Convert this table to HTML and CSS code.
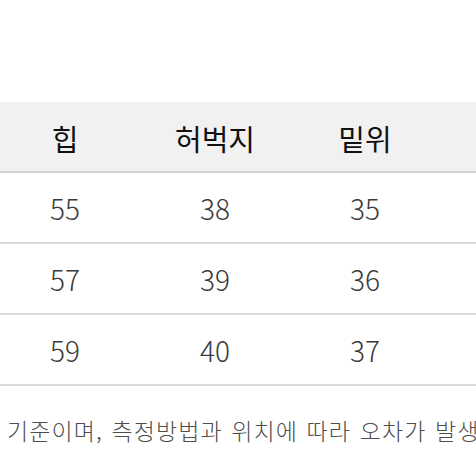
FILE: index.html
```html
<!DOCTYPE html>
<html lang="ko">
<head>
<meta charset="utf-8">
<link rel="stylesheet" href="styles.css">
</head>
<body>
<div class="page">
  <div class="size-table">
    <div class="row head">
      <div class="cell">힙</div>
      <div class="cell">허벅지</div>
      <div class="cell">밑위</div>
      <div class="cell"></div>
    </div>
    <div class="row">
      <div class="cell">55</div>
      <div class="cell">38</div>
      <div class="cell">35</div>
      <div class="cell"></div>
    </div>
    <div class="row">
      <div class="cell">57</div>
      <div class="cell">39</div>
      <div class="cell">36</div>
      <div class="cell"></div>
    </div>
    <div class="row">
      <div class="cell">59</div>
      <div class="cell">40</div>
      <div class="cell">37</div>
      <div class="cell"></div>
    </div>
  </div>
  <p class="note">기준이며, 측정방법과 위치에 따라 오차가 발생</p>
</div>
</body>
</html>
```

FILE: styles.css
```css
html, body {
  margin: 0;
  padding: 0;
  background: #ffffff;
  overflow: hidden;
}
body {
  width: 476px;
  height: 476px;
  font-family: "Noto Sans CJK KR", "Noto Sans", sans-serif;
}
.page {
  padding-top: 102px;
}
.size-table {
  margin-left: -10px;
  width: 600px;
  display: flex;
  flex-direction: column;
}
.row {
  display: grid;
  grid-template-columns: 150px 150px 150px 1fr;
  height: 69px;
  border-bottom: 2px solid #dadada;
  align-items: center;
}
.row.head {
  background: #f1f1f1;
  border-bottom-color: #d2d2d2;
}
.cell {
  text-align: center;
  font-size: 28px;
  font-weight: 300;
  color: #3a3a3a;
  line-height: 1;
}
.head .cell {
  font-size: 29px;
  font-weight: 400;
  color: #111111;
  padding-top: 4px;
}
.note {
  margin: 33px 0 0 7px;
  white-space: nowrap;
  font-size: 23px;
  letter-spacing: 1.1px;
  word-spacing: 1px;
  font-weight: 300;
  color: #4e4e4e;
  line-height: 1;
}
```
